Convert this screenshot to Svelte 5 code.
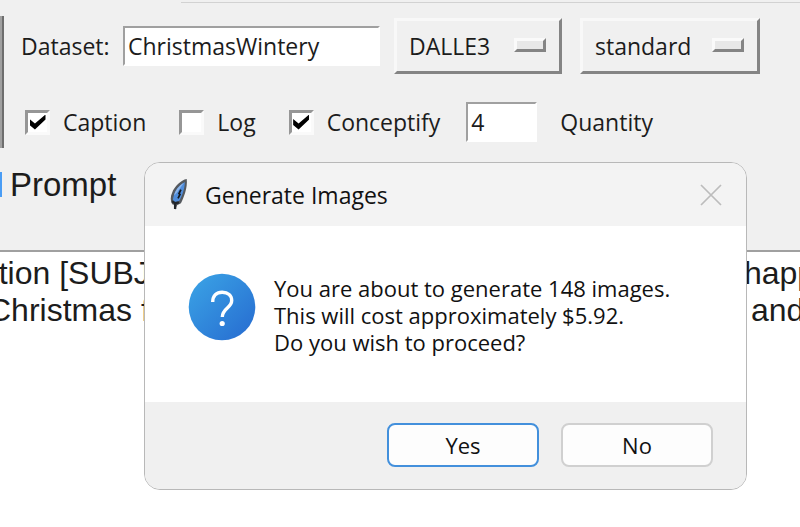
<script lang="ts">
  // State
  let dataset = $state('ChristmasWintery')
  let model = $state('DALLE3')
  let quality = $state('standard')
  let caption = $state(true)
  let log = $state(false)
  let conceptify = $state(true)
  let quantity = $state('4')
  let showDialog = $state(true)
  let prompt = $state(
    'rtion [SUBJECT] with a festive golden holiday scene, happy\n' +
    'Christmas family gathering with wrapped holiday gifts and'
  )

  function closeDialog() {
    showDialog = false
  }

  function handleKeydown(e: KeyboardEvent) {
    if (e.key === 'Escape') {
      closeDialog()
    }
  }
</script>

<svelte:window onkeydown={handleKeydown} />

<div class="app">
  <div class="panel">
    <div class="top-line"></div>
    <div class="options">
      <div class="side-edge"></div>
      <div class="rows">
        <div class="row">
          <label class="dataset-label" for="dataset">Dataset:</label>
          <input id="dataset" class="entry dataset" type="text" bind:value={dataset} />
          <div class="menu model">
            <select aria-label="Model" bind:value={model}>
              <option>DALLE3</option>
              <option>DALLE2</option>
            </select>
          </div>
          <div class="menu quality">
            <select aria-label="Quality" bind:value={quality}>
              <option>standard</option>
              <option>hd</option>
            </select>
          </div>
        </div>

        <div class="row checks">
          <label class="check"><input type="checkbox" bind:checked={caption} />Caption</label>
          <label class="check"><input type="checkbox" bind:checked={log} />Log</label>
          <label class="check"><input type="checkbox" bind:checked={conceptify} />Conceptify</label>
          <input id="quantity" class="entry quantity" type="text" bind:value={quantity} />
          <label for="quantity">Quantity</label>
        </div>
      </div>
    </div>

    <div class="prompt-row">
      <span class="marker"></span>
      <label for="prompt">Prompt</label>
    </div>
  </div>

  <textarea id="prompt" wrap="off" spellcheck="false" bind:value={prompt}></textarea>

  {#if showDialog}
    <div class="dialog" role="dialog" aria-labelledby="dialog-title">
      <div class="title-bar">
        <svg class="feather" width="20" height="33" viewBox="0 0 20 34">
          <path d="M18 1 C12 2 5 9 3 15 C1 19 1 24 3 27 L6 28 L6 33 L8 28 L12 26 C15 20 19 10 18 1 Z" fill="#55595e" />
          <path d="M16 4 C11 7 6 12 5 17 C4 20 3 23 5 25 L10 24 C13 19 16 11 16 4 Z" fill="#4f8ddb" />
          <path d="M15 5 C10 8 6 13 5 18 L8 15 Z" fill="#8fb6ea" />
          <path d="M12 12 L10 16 L11 17 L9 21" fill="none" stroke="#14181e" stroke-width="1.8" />
          <path d="M3 24 L6 26 L10 25 M6 25 L6 32" fill="none" stroke="#22262b" stroke-width="2.4" />
        </svg>
        <h1 id="dialog-title">Generate Images</h1>
        <button class="close" aria-label="Close" onclick={closeDialog}>
          <svg width="22" height="22" viewBox="0 0 22 22">
            <path d="M1 1 L21 21 M21 1 L1 21" stroke="#bcbcbc" stroke-width="1.7" />
          </svg>
        </button>
      </div>

      <div class="body">
        <svg class="question" width="68" height="68" viewBox="0 0 68 68">
          <defs>
            <linearGradient id="blue" x1="0" y1="0" x2="1" y2="1">
              <stop offset="0.1" stop-color="#399fe4" />
              <stop offset="0.9" stop-color="#2870d2" />
            </linearGradient>
          </defs>
          <circle cx="34" cy="34" r="33.3" fill="url(#blue)" />
          <path d="M24.7 29 C24.7 22.8 28.5 19.2 34.2 19.2 C40 19.2 43.7 22.6 43.7 27.5 C43.7 35 34.3 35 34.3 44" fill="none" stroke="#fff" stroke-width="3.4" />
          <circle cx="34.2" cy="50.5" r="2.6" fill="#fff" />
        </svg>
        <p>
          You are about to generate 148 images.<br />
          This will cost approximately $5.92.<br />
          Do you wish to proceed?
        </p>
      </div>

      <div class="buttons">
        <button class="default" onclick={closeDialog}>Yes</button>
        <button onclick={closeDialog}>No</button>
      </div>
    </div>
  {/if}
</div>

<style>
  :global(body) {
    margin: 0;
    background: #fff;
  }

  .app {
    position: relative;
    display: flex;
    flex-direction: column;
    min-height: 100vh;
    overflow: hidden;
    font-family: 'Open Sans', 'Noto Sans', sans-serif;
    font-size: 23px;
    line-height: 30px;
    color: #1c1c1c;
  }

  .app * {
    box-sizing: border-box;
  }

  .panel {
    padding-top: 2px;
    background: #f0f0f0;
  }

  .top-line {
    height: 1px;
    margin-left: 181px;
    background: #d2d2d2;
  }

  .options {
    display: flex;
    padding-top: 13px;
  }

  .side-edge {
    width: 4px;
    background: #a0a0a0;
    border-right: 2px solid #6e6e6e;
  }

  .rows {
    flex: 1;
    display: flex;
    flex-direction: column;
    gap: 28px;
    padding: 2px 0 6px 17px;
  }

  .row {
    display: flex;
    align-items: center;
    white-space: nowrap;
  }

  .dataset-label {
    width: 102px;
  }

  .entry {
    height: 40px;
    padding: 0 3px;
    border: 2px solid;
    border-color: #a0a0a0 #fff #fff #a0a0a0;
    border-radius: 0;
    outline: none;
    background: #fff;
    color: inherit;
    font: inherit;
  }

  .dataset {
    width: 257px;
    margin-right: 14px;
  }

  .menu {
    position: relative;
    height: 56px;
  }

  .model {
    width: 168px;
    margin-right: 18px;
  }

  .quality {
    width: 180px;
  }

  /* Raised indicator on the right of the option menu */
  .menu::after {
    content: '';
    position: absolute;
    right: 16px;
    top: 20px;
    width: 32px;
    height: 14px;
    box-sizing: border-box;
    border: 3px solid;
    border-color: #fafafa #848484 #848484 #fafafa;
    background: #e8e8e8;
    pointer-events: none;
  }

  select {
    appearance: none;
    width: 100%;
    height: 100%;
    padding: 0 12px;
    border: 3px solid;
    border-color: #f8f8f8 #848484 #848484 #f8f8f8;
    border-radius: 0;
    outline: none;
    background: #f0f0f0;
    color: inherit;
    font: inherit;
  }

  .checks {
    padding-left: 4px;
  }

  .check {
    display: flex;
    align-items: center;
    gap: 13px;
    margin-right: 33px;
  }

  .check input {
    appearance: none;
    display: grid;
    place-items: center;
    width: 25px;
    height: 25px;
    margin: 0;
    border: 3px solid;
    border-color: #969696 #fafafa #fafafa #969696;
    background: #fff;
  }

  .check input:checked::before {
    content: '';
    width: 16px;
    height: 15px;
    background: #000;
    clip-path: polygon(0 30%, 34% 60%, 100% 0, 100% 34%, 34% 100%, 0 70%);
  }

  .check:nth-of-type(3) {
    margin-right: 26px;
  }

  .quantity {
    width: 71px;
    margin-right: 23px;
  }

  .prompt-row {
    display: flex;
    align-items: center;
    gap: 8px;
    padding: 18px 0 47px;
    font: 33px/37px 'Liberation Sans', Arial, sans-serif;
  }

  .marker {
    width: 2px;
    height: 25px;
    background: #4a9df5;
  }

  textarea {
    flex: 1;
    display: block;
    width: calc(100% + 12px);
    margin: 0 0 0 -12px;
    padding: 3px 0;
    border: 0;
    border-top: 2px solid #a0a0a0;
    outline: none;
    overflow: hidden;
    resize: none;
    background: #fff;
    color: #1c1c1c;
    font: 32px/37px 'Liberation Sans', Arial, sans-serif;
  }

  .dialog {
    position: absolute;
    top: 162px;
    left: 144px;
    width: 603px;
    border: 1px solid #b8b8b8;
    border-radius: 16px;
    overflow: hidden;
    background: #fff;
    color: #111;
  }

  .title-bar {
    display: flex;
    align-items: center;
    height: 63px;
    padding: 0 24px;
    background: #f3f3f3;
  }

  h1 {
    flex: 1;
    margin: 0 0 0 16px;
    font-size: 23px;
    font-weight: 400;
  }

  .close {
    display: flex;
    padding: 0;
    border: 0;
    background: none;
  }

  .body {
    display: flex;
    gap: 18px;
    padding: 47px 43px 46px;
  }

  .body p {
    margin: 2px 0 0;
    font-size: 22px;
    line-height: 27px;
    white-space: nowrap;
  }

  .buttons {
    display: flex;
    justify-content: flex-end;
    gap: 22px;
    padding: 21px 33px 22px;
    background: #f0f0f0;
  }

  .buttons button {
    width: 152px;
    height: 44px;
    padding: 0;
    border: 2px solid #d0d0d0;
    border-radius: 8px;
    background: #fdfdfd;
    color: inherit;
    font: inherit;
    font-size: 22px;
  }

  .buttons .default {
    border-color: #4390dc;
  }
</style>
